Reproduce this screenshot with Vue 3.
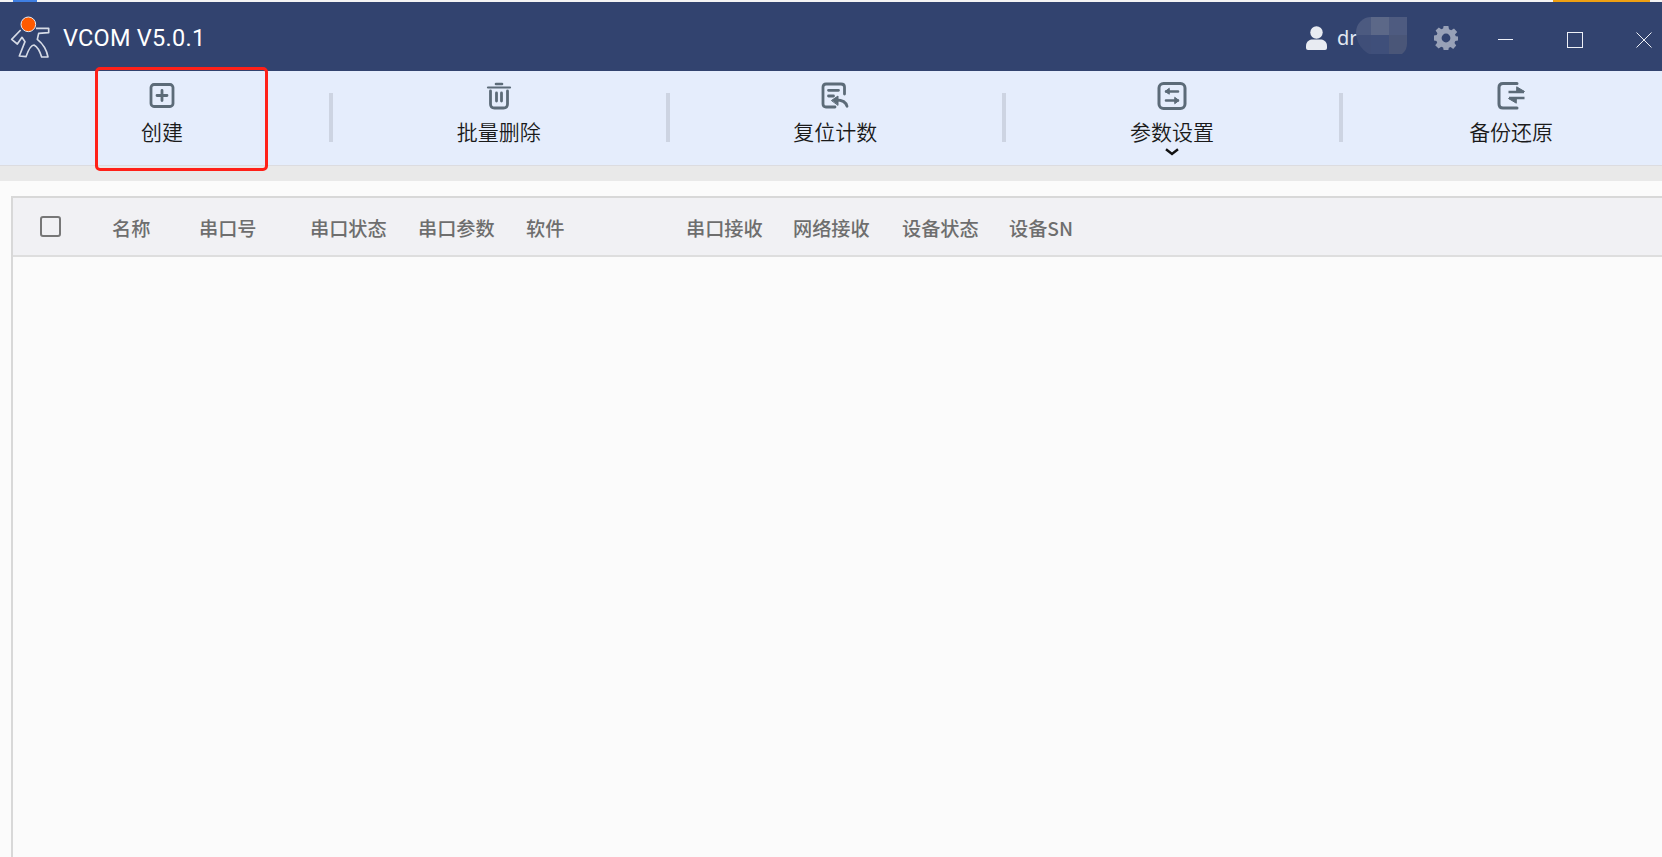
<script setup>
const tools = [
  { label: '创建', icon: 'plus' },
  { label: '批量删除', icon: 'trash' },
  { label: '复位计数', icon: 'reset' },
  { label: '参数设置', icon: 'sliders', chevron: true },
  { label: '备份还原', icon: 'swap', last: true },
]
const cols = [
  { t: '名称', w: 87 }, { t: '串口号', w: 111 }, { t: '串口状态', w: 108 }, { t: '串口参数', w: 108 },
  { t: '软件', w: 160 }, { t: '串口接收', w: 107 }, { t: '网络接收', w: 109 }, { t: '设备状态', w: 107 }, { t: '设备SN', w: 100 },
]
</script>

<template>
  <div class="app">
    <div class="strip">
      <span class="s-blue"></span>
      <span class="s-orange"></span>
    </div>
    <header class="titlebar">
      <svg class="logo" width="40" height="44" viewBox="30 48 120 132" fill="none">
        <path d="M62 90 L35 118 L52 132 L66 112 L75 125 L58 168 L78 170 C85 150 95 135 102 135 C112 140 120 155 125 171 L144 171 C140 150 130 132 112 118 L116 100 L146 98 L146 85 L108 85" stroke="#d6dbe6" stroke-width="5" stroke-linejoin="round"/>
        <circle cx="85" cy="73" r="22" fill="#ff5a00" stroke="#e8ecf4" stroke-width="3"/>
      </svg>
      <span class="title">VCOM V5.0.1</span>
      <div class="spacer"></div>
      <svg class="user" width="21" height="24" viewBox="0 0 21 24" fill="#e8ebf2">
        <circle cx="10.5" cy="6.5" r="6.2"/>
        <path d="M0 20 C0 15 4 13.5 6.5 13.5 H14.5 C17 13.5 21 15 21 20 V22 Q21 24 19 24 H2 Q0 24 0 22 Z"/>
      </svg>
      <div class="username">
        <span>dr</span>
        <div class="blur">
          <i class="b1"></i><i class="b2"></i><i class="b3"></i><i class="b4"></i><i class="b5"></i><i class="b6"></i>
        </div>
      </div>
      <svg class="gear" width="24" height="24" viewBox="0 0 24 24" fill="#98a1b7">
        <path fill-rule="evenodd" d="M9.6 0 H14.4 L15 3.3 L17.2 4.2 L20 2.4 L23.2 6 L21 8.6 L21.8 10.2 L24 10.4 V14.4 L21.3 15 L20.5 17 L22.2 19.6 L19.2 23 L16.6 21 L14.8 21.8 L14.4 24 H9.6 L9.1 21.4 L7.2 20.7 L4.6 22.4 L1.2 19.2 L3.2 16.7 L2.5 15 L0 14.4 V9.6 L2.7 9 L3.4 7.2 L1.6 4.4 L4.8 1.4 L7.3 3.3 L9.1 2.6 Z M12 7.6 A4.4 4.4 0 1 0 12 16.4 A4.4 4.4 0 1 0 12 7.6 Z"/>
      </svg>
      <div class="min"></div>
      <div class="max"></div>
      <svg class="close" width="16" height="16" viewBox="0 0 16 16" stroke="#eef1f7" stroke-width="1"><path d="M.5 .5 L15.5 15.5 M15.5 .5 L.5 15.5"/></svg>
    </header>

    <nav class="toolbar">
      <template v-for="(t, i) in tools" :key="t.label">
        <div class="tool" :class="{ last: t.last }">
          <svg class="ticon" width="30" height="28" viewBox="0 0 30 28" fill="none" stroke="#5c6b78" stroke-width="2.8" stroke-linecap="round" stroke-linejoin="round">
            <template v-if="t.icon === 'plus'">
              <rect x="4" y="2.5" width="22" height="22" rx="3"/>
              <path d="M15 8.5 V18.5 M10 13.5 H20"/>
            </template>
            <template v-else-if="t.icon === 'trash'">
              <path d="M4 5.5 H26" stroke-width="2.2"/>
              <path d="M12 2 H18" stroke-width="2.6"/>
              <path d="M6.5 9 V22 Q6.5 26 10.5 26 H19.5 Q23.5 26 23.5 22 V9"/>
              <path d="M12.5 11 V19 M17.5 11 V19"/>
            </template>
            <template v-else-if="t.icon === 'reset'">
              <path d="M15 25 H6 Q3 25 3 22 V5 Q3 2 6 2 H21 Q24.5 2 24.5 5 V12"/>
              <path d="M8.5 8.3 H18.5 M8.5 14 H13.5"/>
              <path d="M11.7 18.3 L18 14 V23 Z" fill="#5c6b78" stroke-width="1"/>
              <path d="M16 18 C22 18 26 20 27 24.3" stroke-width="2.8"/>
            </template>
            <template v-else-if="t.icon === 'sliders'">
              <rect x="2" y="1.5" width="26" height="25" rx="4.5" stroke-width="3"/>
              <path d="M9 9.5 H21 M9 18.5 H21" stroke-width="2.6"/>
              <path d="M12 6.5 L8 9.5 L12 12 Z M18 15.5 L22 18.5 L18 21.5 Z" fill="#5c6b78" stroke-width="1"/>
            </template>
            <template v-else>
              <path d="M21 1.5 H7 Q3 1.5 3 5.5 V22 Q3 26 7 26 H21" stroke-width="3"/>
              <path d="M12.5 10 H28 M13 16 H28.5" stroke-width="2.6" stroke-linecap="butt"/>
              <path d="M21 5 L28.5 9.5 L21 9.5 Z M20 16.5 L12.5 16.5 L20 21 Z" fill="#5c6b78" stroke-width="1"/>
            </template>
          </svg>
          <span class="tlabel">{{ t.label }}</span>
          <svg v-if="t.chevron" class="chev" width="14" height="8" viewBox="0 0 14 8" fill="none" stroke="#111" stroke-width="2.4"><path d="M1 1.2 L7 6 L13 1.2"/></svg>
        </div>
        <div v-if="i < tools.length - 1" class="divider"></div>
      </template>
    </nav>

    <div class="band"></div>

    <main class="content">
      <section class="table">
        <div class="thead">
          <span class="check"></span>
          <span v-for="c in cols" :key="c.t" class="th" :style="{ width: c.w + 'px' }">{{ c.t }}</span>
        </div>
      </section>
    </main>

    <div class="annot"></div>
  </div>
</template>

<style>
html, body { margin: 0; height: 100%; overflow: hidden; background: #fbfbfb; }
</style>

<style scoped>
.app { position: relative; width: 1662px; height: 857px; display: flex; flex-direction: column; overflow: hidden; font-family: "Noto Sans CJK SC", "Noto Sans", sans-serif; background: #fbfbfb; }
.strip { height: 2px; display: flex; background: #f4f4f4; }
.s-blue { width: 24px; margin-left: 13px; background: #3f7fe3; }
.s-orange { width: 97px; margin-left: 1516px; background: #efa012; }
.titlebar { height: 69px; background: #32436f; display: flex; align-items: center; color: #fff; padding-left: 10px; }
.logo { margin-top: 3px; }
.title { font-family: Roboto, sans-serif; font-size: 23.5px; margin-left: 13px; letter-spacing: .25px; margin-top: 3px; }
.spacer { flex: 1; }
.user { margin-top: 3px; }
.username { position: relative; width: 128px; height: 40px; margin-left: 10px; margin-right: -31px; font-size: 20px; line-height: 38px; color: #e2e8f2; font-family: "Noto Sans", sans-serif; margin-top: 4px; }
.blur { position: absolute; left: 19px; top: 0; width: 51px; height: 40px; display: grid; grid-template-columns: 15px 18px 18px; grid-template-rows: 18px 19px 3px; overflow: hidden; border-radius: 16px 0 14px 26px; margin-top: -2px; }
.b1 { background: #4c5a80; } .b2 { background: #5c6888; } .b3 { background: #4e5b80; }
.b4 { background: #3f4e78; } .b5 { background: #3f4f7a; } .b6 { background: #4a5678; }
.gear { margin-left: 0; margin-right: 40px; margin-top: 2px; }
.min { width: 15px; height: 1px; background: #eef1f7; margin-right: 54px; margin-top: 5px; }
.max { width: 14px; height: 14px; border: 1px solid #eef1f7; margin-right: 53px; margin-top: 6px; box-sizing: content-box; }
.close { margin-right: 10px; margin-top: 6px; }

.toolbar { height: 94px; background: #e5edfc; display: flex; align-items: flex-start; }
.tool { position: relative; flex: 0 0 324px; display: flex; flex-direction: column; align-items: center; }
.tool.last { flex-basis: 329px; }
.ticon { margin-top: 11px; }
.tlabel { font-size: 21px; line-height: 30px; color: #1a1a1a; margin-top: 6px; font-weight: 350; }
.chev { position: absolute; top: 77px; left: 50%; margin-left: -7px; }
.divider { flex: 0 0 4px; height: 49px; margin: 22px 3.67px 0 5px; background: #cdd4e2; }

.band { height: 16px; background: #e9e9e9; border-top: 1px solid #dcdce0; box-sizing: border-box; }
.content { flex: 1; padding: 15px 0 0 11px; display: flex; }
.table { flex: 1; border-left: 2px solid #d8d8d8; background: #fbfbfb; }
.thead { height: 57px; background: #f1f1f4; border-top: 2px solid #d8d8d8; border-bottom: 2px solid #dedede; display: flex; align-items: center; box-sizing: content-box; padding-left: 27px; }
.check { box-sizing: border-box; flex: 0 0 21px; height: 21px; border: 2.4px solid #777; border-radius: 3px; margin-right: 51px; }
.th { flex: none; font-size: 19.2px; font-weight: 500; color: #6e6e6e; white-space: nowrap; padding-top: 2px; }
.annot { position: absolute; left: 95px; top: 67px; width: 173px; height: 104px; box-sizing: border-box; border: 3.5px solid #ff2018; border-radius: 5px; }
</style>
